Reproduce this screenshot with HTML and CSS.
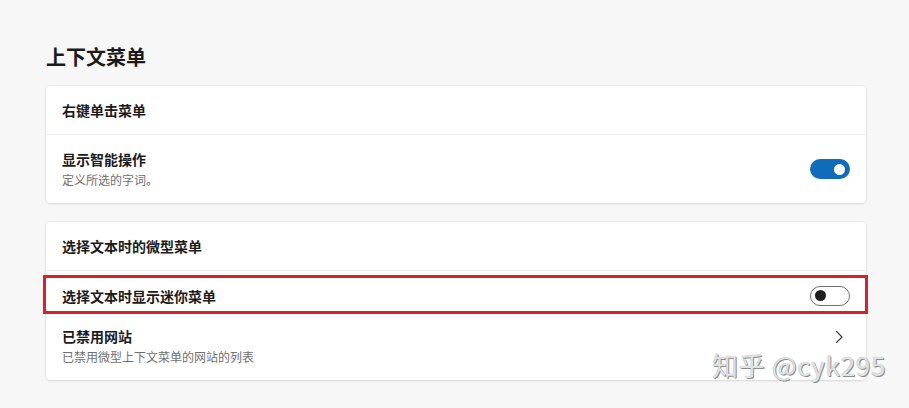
FILE: index.html
```html
<!DOCTYPE html>
<html lang="zh-CN">
<head>
<meta charset="utf-8">
<title>上下文菜单</title>
<link rel="stylesheet" href="styles.css">
</head>
<body>
<div class="page">
  <h1 class="title">上下文菜单</h1>

  <section class="card">
    <div class="card-header">右键单击菜单</div>
    <div class="row row-first">
      <div class="row-text">
        <div class="row-title">显示智能操作</div>
        <div class="row-desc">定义所选的字词。</div>
      </div>
      <span class="toggle toggle-on"><span class="knob"></span></span>
    </div>
  </section>

  <section class="card">
    <div class="card-header">选择文本时的微型菜单</div>
    <div class="row row-toggle">
      <div class="row-title">选择文本时显示迷你菜单</div>
      <span class="toggle toggle-off"><span class="knob"></span></span>
      <div class="highlight"></div>
    </div>
    <div class="row row-link">
      <div class="row-text">
        <div class="row-title">已禁用网站</div>
        <div class="row-desc">已禁用微型上下文菜单的网站的列表</div>
      </div>
      <svg class="chevron" width="16" height="20" viewBox="0 0 16 20" aria-hidden="true">
        <path d="M5.5 4.5 L11 10 L5.5 15.5" fill="none" stroke="#3a3a3a" stroke-width="1.1" stroke-linecap="round" stroke-linejoin="round"/>
      </svg>
    </div>
  </section>
</div>
<div class="watermark">知乎 @cyk295</div>
</body>
</html>
```

FILE: styles.css
```css
html, body {
  margin: 0;
  padding: 0;
}
body {
  background: #f7f7f7;
  width: 909px;
  height: 408px;
  overflow: hidden;
  position: relative;
  font-family: "Noto Sans CJK SC", "Liberation Sans", sans-serif;
  color: #1b1b1b;
}
.page {
  padding: 43px 43px 0 46px;
  width: 820px;
}
.title {
  margin: 0 0 15px;
  font-size: 20px;
  line-height: 28px;
  font-weight: 700;
}
.card {
  background: #fff;
  border-radius: 4px;
  box-shadow: 0 0 0 1px rgba(0, 0, 0, 0.045), 0 1px 3px rgba(0, 0, 0, 0.09);
  margin-bottom: 19px;
}
.card-header {
  height: 48px;
  padding: 0 16px;
  display: flex;
  align-items: center;
  font-size: 14px;
  font-weight: 600;
  border-bottom: 1px solid #ebebeb;
}
.row {
  display: flex;
  align-items: center;
  justify-content: space-between;
  padding: 0 16px;
  position: relative;
}
.row-first {
  padding-top: 14px;
  padding-bottom: 14px;
}
.row-toggle {
  height: 49px;
}
.row-link {
  align-items: flex-start;
  padding-top: 6px;
  padding-bottom: 14px;
}
.row-title {
  font-size: 14px;
  line-height: 20px;
  font-weight: 600;
}
.row-desc {
  margin-top: 2px;
  font-size: 12px;
  line-height: 18px;
  color: #707070;
}
.toggle {
  box-sizing: border-box;
  width: 40px;
  height: 20px;
  border-radius: 10px;
  display: flex;
  align-items: center;
  flex-shrink: 0;
}
.toggle-on {
  background: #0f6cbd;
  justify-content: flex-end;
  padding-right: 5px;
}
.toggle-on .knob {
  width: 11px;
  height: 11px;
  border-radius: 50%;
  background: #fff;
}
.toggle-off {
  border: 1px solid #6e6e6e;
  background: #fff;
  padding-left: 4px;
}
.toggle-off .knob {
  width: 11px;
  height: 11px;
  border-radius: 50%;
  background: #1f1f1f;
}
.chevron {
  display: block;
  margin-top: 1px;
  margin-right: 3px;
}
.highlight {
  position: absolute;
  left: -3px;
  top: 4px;
  width: 825px;
  height: 39px;
  box-sizing: border-box;
  border: 3px solid #dc1f2b;
  pointer-events: none;
}
.watermark {
  position: absolute;
  left: 712px;
  top: 347px;
  font-size: 26px;
  line-height: 36px;
  letter-spacing: 0.7px;
  font-family: "Noto Sans CJK SC", "Liberation Sans", sans-serif;
  color: #e2e2e2;
  text-shadow: 1px 1px 0 #8c8c8c, 0 0 1px #9a9a9a;
  white-space: nowrap;
}
```
